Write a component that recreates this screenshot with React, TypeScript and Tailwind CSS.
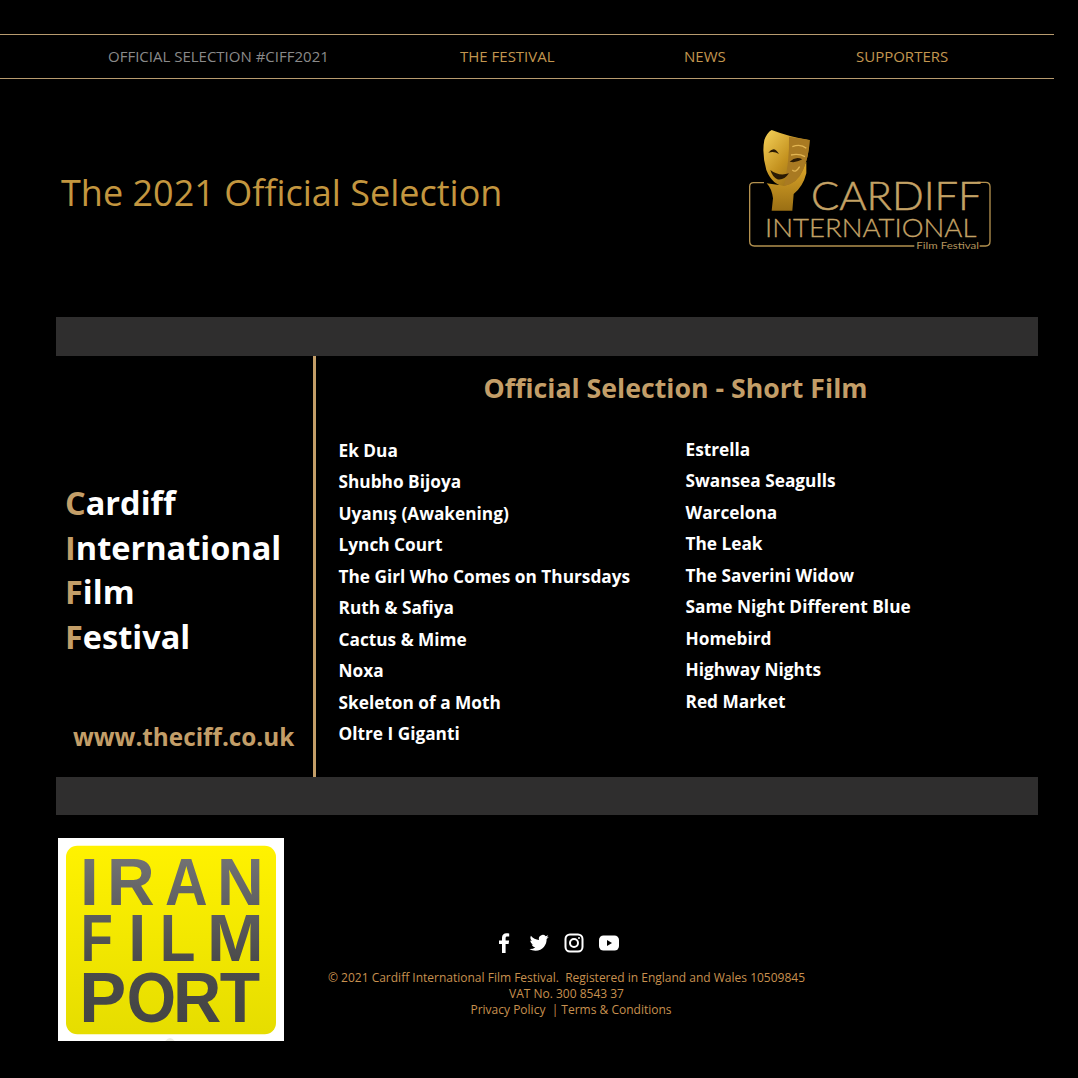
import React from "react";

const open = "font-['Open_Sans',sans-serif]";

function CiffLogo() {
  return (
    <svg width="280" height="140" viewBox="0 0 840 420" className="block">
      <defs>
        <linearGradient id="gold" x1="0" y1="0" x2="1" y2="1">
          <stop offset="0" stopColor="#f6d25a" />
          <stop offset="0.5" stopColor="#c4921f" />
          <stop offset="1" stopColor="#7d5a12" />
        </linearGradient>
        <linearGradient id="hand" x1="0" y1="0" x2="0" y2="1">
          <stop offset="0" stopColor="#e0a92a" />
          <stop offset="1" stopColor="#9a6f14" />
        </linearGradient>
      </defs>
      <path d="M105 188H74Q62 188 62 200V364Q62 378 76 378H556M752 378H770Q783 378 783 364V200Q783 187 770 187H745" fill="none" stroke="#b3914f" strokeWidth="4" />
      <path d="M113 190Q128 205 132 235L128 272H190L194 222Q222 200 232 160L232 125L205 170L150 195Z" fill="url(#hand)" />
      <path d="M128 30Q185 52 242 60Q240 110 222 150Q205 190 165 198Q130 195 112 150Q98 100 106 60Q114 38 128 30Z" fill="url(#gold)" />
      <path d="M180 50Q240 60 242 60Q240 110 222 150Q205 190 165 198Q182 120 180 50Z" fill="#a97a22" />
      <path d="M190 80Q215 70 232 85M186 105Q210 100 228 110M190 150Q200 160 212 140" fill="none" stroke="#e2b552" strokeWidth="4" />
      <path d="M118 98Q135 75 150 102Q135 92 118 98ZM182 125Q200 108 220 118Q200 130 182 125Z" fill="#2a1a04" />
      <path d="M124 150Q150 170 180 160Q165 182 145 178Q130 170 124 150Z" fill="#2a1a04" />
      <text x="246" y="269" fontFamily="Lato, sans-serif" fontWeight="300" fontSize="116" textLength="512" lengthAdjust="spacingAndGlyphs" fill="#c4a265" stroke="#c4a265" strokeWidth="1.5">CARDIFF</text>
      <text x="108" y="350" fontFamily="Lato, sans-serif" fontWeight="300" fontSize="78" textLength="634" lengthAdjust="spacingAndGlyphs" fill="#c4a265" stroke="#c4a265" strokeWidth="1">INTERNATIONAL</text>
      <text x="562" y="386" fontFamily="Lato, sans-serif" fontWeight="400" fontSize="30" textLength="188" lengthAdjust="spacingAndGlyphs" fill="#b3945c">Film Festival</text>
    </svg>
  );
}

function L({ c, x, y, w, s }: { c: string; x: number; y: number; w: number; s: number }) {
  return <text x={x} y={y} fontSize={s} textLength={w} lengthAdjust="spacingAndGlyphs">{c}</text>;
}

function PortLogo() {
  return (
    <svg width="226" height="203" viewBox="54 39 678 609" className="block">
      <defs>
        <linearGradient id="yel" x1="0" y1="0" x2="0" y2="1">
          <stop offset="0" stopColor="#fff200" />
          <stop offset="1" stopColor="#e6dd00" />
        </linearGradient>
        <linearGradient id="gr1" gradientUnits="userSpaceOnUse" x1="0" y1="97" x2="0" y2="600">
          <stop offset="0" stopColor="#727274" />
          <stop offset="0.6" stopColor="#4c4c4c" />
          <stop offset="1" stopColor="#444" />
        </linearGradient>
      </defs>
      <rect x="54" y="39" width="678" height="609" fill="#fff" />
      <rect x="78" y="62" width="630" height="566" rx="34" fill="url(#yel)" />
      <path d="M376 648Q390 630 404 648Z" fill="#ecece4" />
      <g fontFamily="'Liberation Sans', sans-serif" fontWeight="700" fill="url(#gr1)">
        <L c="I" x={120} y={240} w={56} s={198} />
        <L c="R" x={201} y={240} w={143} s={198} />
        <L c="A" x={375} y={240} w={128} s={198} />
        <L c="N" x={531} y={240} w={140} s={198} />
        <L c="F" x={122} y={408} w={96} s={198} />
        <L c="I" x={265} y={408} w={54} s={198} />
        <L c="L" x={359} y={408} w={107} s={198} />
        <L c="M" x={501} y={408} w={170} s={198} />
        <L c="P" x={118} y={592} w={141} s={212} />
        <L c="O" x={260} y={592} w={148} s={212} />
        <L c="R" x={399} y={592} w={145} s={212} />
        <L c="T" x={539} y={592} w={121} s={212} />
      </g>
    </svg>
  );
}

function Social() {
  return (
    <div className="flex items-center justify-center gap-[11px] text-white">
      <svg width="24" height="24" viewBox="0 0 24 24" fill="#fff"><path d="M13.6 22v-9h3l.5-3.4h-3.5V7.3c0-1 .4-1.7 1.8-1.7h1.8V2.500c-.4 0-1.500-.2-2.700-.2-2.700 0-4.500 1.600-4.500 4.600v2.700H7v3.400h3v9z" /></svg>
      <svg width="24" height="24" viewBox="0 0 24 24" fill="#fff"><path d="M21.800 5.800c-.7.300-1.500.500-2.300.6.800-.5 1.400-1.200 1.700-2.100-.8.500-1.600.800-2.500 1A3.900 3.900 0 0 0 12 8.900 11.200 11.200 0 0 1 3.900 4.800c-1 1.800-.5 4 1.200 5.200-.6 0-1.200-.2-1.800-.5 0 1.900 1.300 3.500 3.100 3.900-.6.200-1.200.2-1.700.1.500 1.600 2 2.700 3.600 2.700A7.900 7.900 0 0 1 2.500 18c1.700 1.100 3.800 1.700 6 1.700 7.300 0 11.400-6.200 11.100-11.700.8-.5 1.500-1.200 2.200-2.200z" /></svg>
      <svg width="24" height="24" viewBox="0 0 24 24" fill="none" stroke="#fff" strokeWidth="2"><rect x="3.500" y="3.500" width="17" height="17" rx="4.500" /><circle cx="12" cy="12" r="4" /><circle cx="17" cy="7" r="1" fill="#fff" stroke="none" /></svg>
      <svg width="24" height="24" viewBox="0 0 24 24"><rect x="2" y="4.500" width="20" height="15" rx="4.500" fill="#fff" /><path d="M10 9v6l5-3z" fill="#000" /></svg>
    </div>
  );
}

const leftFilms = ["Ek Dua", "Shubho Bijoya", "Uyanış (Awakening)", "Lynch Court", "The Girl Who Comes on Thursdays", "Ruth & Safiya", "Cactus & Mime", "Noxa", "Skeleton of a Moth", "Oltre I Giganti"];
const rightFilms = ["Estrella", "Swansea Seagulls", "Warcelona", "The Leak", "The Saverini Widow", "Same Night Different Blue", "Homebird", "Highway Nights", "Red Market"];

function FilmList({ items }: { items: string[] }) {
  return (
    <ul className="flex flex-col">
      {items.map((t) => (
        <li key={t} className="h-[31.44px] leading-[31.44px] text-[17.25px] font-bold text-white whitespace-nowrap">{t}</li>
      ))}
    </ul>
  );
}

export default function App() {
  return (
    <div className={`w-[1078px] h-[1078px] bg-black overflow-hidden pt-[34px] ${open}`}>
      <nav className="w-[1054px] h-[45px] border-y border-[#b89b6f] flex items-center pl-[108px] text-[15px] text-[#c3964f]">
        <span className="text-[#8a8a8a] w-[352px]">OFFICIAL SELECTION #CIFF2021</span>
        <span className="w-[224px]">THE FESTIVAL</span>
        <span className="w-[172px]">NEWS</span>
        <span>SUPPORTERS</span>
      </nav>
      <header className="h-[238px] flex items-start justify-between pl-[61px] pr-[68px]">
        <h1 className="mt-[96px] text-[36px] leading-none text-[#c3963f]">The 2021 Official Selection</h1>
        <div className="mt-[41px] mr-[1px]"><CiffLogo /></div>
      </header>
      <div className="mx-[56px] w-[982px] h-[39px] bg-[#2f2e2e]" />
      <section className="mx-[56px] w-[982px] h-[421px] flex">
        <div className="w-[260px] border-r-[3px] border-[#c39e68] flex flex-col pl-[9px]">
          <div className="pt-[125.400px] text-[32.5px] leading-[44.5px] font-bold text-white">
            <p><span className="text-[#c39e68]">C</span>ardiff</p>
            <p><span className="text-[#c39e68]">I</span>nternational</p>
            <p><span className="text-[#c39e68]">F</span>ilm</p>
            <p><span className="text-[#c39e68]">F</span>estival</p>
          </div>
          <p className="mt-[62px] ml-[8px] text-[24.3px] leading-[32px] font-bold text-[#c39e68] whitespace-nowrap">www.theciff.co.uk</p>
        </div>
        <div className="flex-1 flex flex-col">
          <h2 className="pt-[13px] pl-[167.500px] text-[26.7px] leading-[38px] font-bold text-[#c39e68] whitespace-nowrap">Official Selection - Short Film</h2>
          <div className="flex pl-[22.500px] pt-[27px]">
            <div className="w-[347px] pt-[1px]"><FilmList items={leftFilms} /></div>
            <FilmList items={rightFilms} />
          </div>
        </div>
      </section>
      <div className="mx-[56px] w-[982px] h-[38px] bg-[#2f2e2e]" />
      <footer className="flex pl-[58px] pt-[23px]">
        <PortLogo />
        <div className="w-[566px] ml-[-2px] pt-[93px] flex flex-col items-center">
          <div className="mr-[18px]"><Social /></div>
          <div className="mt-[15px] text-[12px] leading-[16px] text-[#c8914f] text-center whitespace-pre ml-[3px]">
            <p>© 2021 Cardiff International Film Festival.  Registered in England and Wales 10509845</p>
            <p>VAT No. 300 8543 37</p>
            <p className="ml-[9px]">Privacy Policy  | Terms &amp; Conditions</p>
          </div>
        </div>
      </footer>
    </div>
  );
}
